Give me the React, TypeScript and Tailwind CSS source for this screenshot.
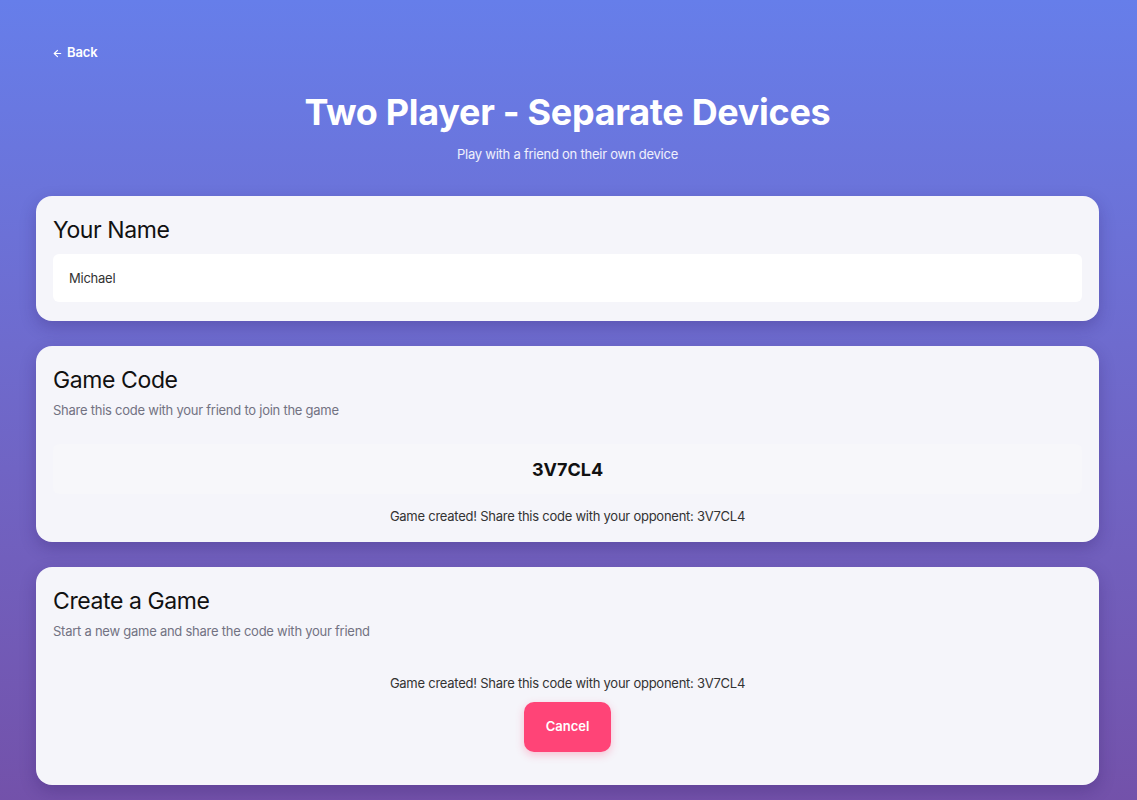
import React from "react";

export default function App() {
  const font = { fontFamily: "Inter, 'Noto Sans', sans-serif" };
  return (
    <div
      style={font}
      className="min-h-screen bg-gradient-to-b from-[#667eea] to-[#7350a8] pl-[36px] pr-[38px] pt-[37px] pb-[40px]"
    >
      <div className="flex h-8 items-center">
        <button className="flex items-center gap-1 px-4 text-[13px] font-semibold tracking-[-0.1px] text-white">
          <svg width="11" height="11" viewBox="0 0 24 24" fill="none" stroke="currentColor" strokeWidth="2.5" strokeLinecap="round" strokeLinejoin="round">
            <path d="M19 12H5" />
            <path d="M12 19l-7-7 7-7" />
          </svg>
          Back
        </button>
      </div>
      <h1 className="mt-[23px] text-center text-[36px] font-bold leading-[40px] tracking-[-0.3px] text-white">
        Two Player - Separate Devices
      </h1>
      <p className="mt-3 text-center text-[13px] leading-5 tracking-[-0.25px] text-white/90">
        Play with a friend on their own device
      </p>

      <div className="mt-8 flex flex-col gap-[25px]">
        <div className="rounded-[16px] bg-[#f5f5fa] px-[17px] pt-4 pb-[19px] shadow-[0_6px_16px_rgba(40,20,90,0.25)]">
          <h2 className="text-[23px] font-normal leading-9 tracking-[-0.4px] text-[#111]">Your Name</h2>
          <div className="mt-1.5 flex h-12 items-center rounded-[6px] bg-white px-4 pt-px text-[13px] tracking-[-0.25px] text-[#333]">
            Michael
          </div>
        </div>

        <div className="rounded-[16px] bg-[#f5f5fa] px-[17px] pt-4 pb-4 shadow-[0_6px_16px_rgba(40,20,90,0.25)]">
          <h2 className="text-[23px] font-normal leading-9 tracking-[-0.4px] text-[#111]">Game Code</h2>
          <p className="mt-0.5 text-[13px] leading-5 tracking-[-0.25px] text-[#727282]">
            Share this code with your friend to join the game
          </p>
          <div className="mt-6 flex h-[50px] items-center justify-center rounded-[6px] bg-[#f7f7fa] text-[18px] font-bold text-[#111]">
            3V7CL4
          </div>
          <p className="mt-3 text-center text-[13px] leading-5 tracking-[-0.25px] text-[#333]">
            Game created! Share this code with your opponent: 3V7CL4
          </p>
        </div>

        <div className="rounded-[16px] bg-[#f5f5fa] px-[17px] pt-4 pb-[33px] shadow-[0_6px_16px_rgba(40,20,90,0.25)]">
          <h2 className="text-[23px] font-normal leading-9 tracking-[-0.4px] text-[#111]">Create a Game</h2>
          <p className="mt-0.5 text-[13px] leading-5 tracking-[-0.25px] text-[#727282]">
            Start a new game and share the code with your friend
          </p>
          <p className="mt-8 text-center text-[13px] leading-5 tracking-[-0.25px] text-[#333]">
            Game created! Share this code with your opponent: 3V7CL4
          </p>
          <div className="mt-[9px] flex justify-center">
            <button className="h-[50px] w-[87px] rounded-[10px] bg-[#ff4477] text-[13px] font-semibold text-white shadow-[0_3px_8px_rgba(255,68,119,0.3)]">
              Cancel
            </button>
          </div>
        </div>
      </div>
    </div>
  );
}
